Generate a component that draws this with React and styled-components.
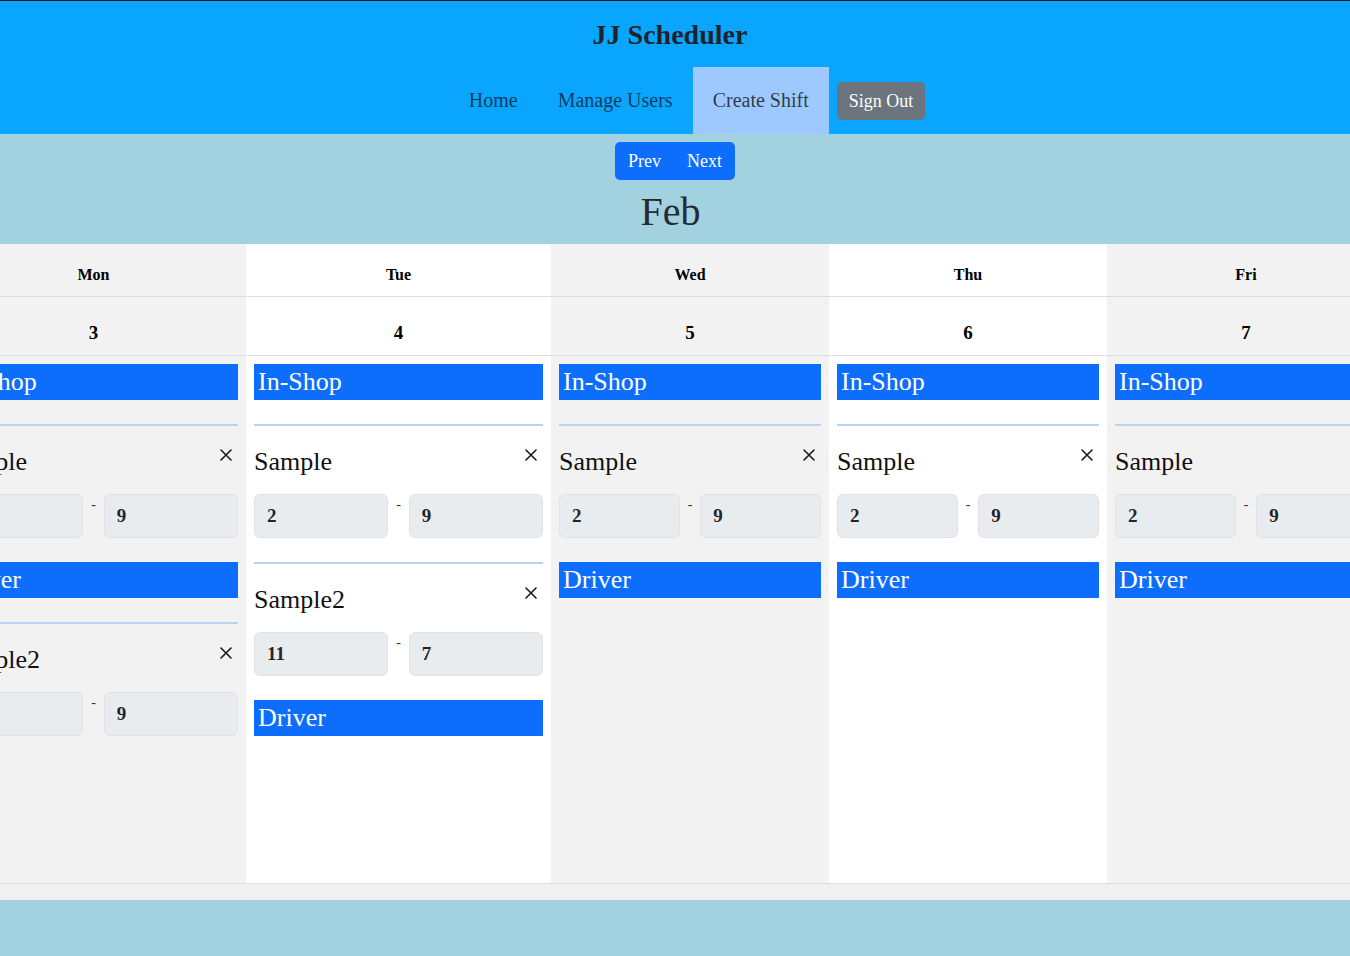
import { useLayoutEffect, useRef } from "react";
import styled, { createGlobalStyle } from "styled-components";

const GlobalStyle = createGlobalStyle`
  html, body {
    margin: 0;
    padding: 0;
    background: #a2d1df;
    font-family: "Liberation Serif", "Times New Roman", serif;
    color: #212529;
  }
`;

const Header = styled.header`
  background-color: #0aa5ff;
  border-top: 1px solid #151515;
`;

const Title = styled.h1`
  margin: 0 0 12px;
  padding: 14px 10px 0 0;
  font-size: 28px;
  line-height: 40px;
  font-weight: bold;
  text-align: center;
  color: #1c2329;
`;

const Nav = styled.nav`
  display: flex;
  justify-content: center;
  align-items: center;
  height: 67px;
  padding-left: 24px;
`;

const NavLink = styled.a`
  display: flex;
  align-items: center;
  height: 100%;
  padding: 0 20px;
  font-size: 20px;
  color: ${(p) => (p.$active ? "rgba(0, 0, 0, 0.72)" : "rgba(0, 0, 0, 0.66)")};
  background: ${(p) => (p.$active ? "#9ec9fe" : "transparent")};
  text-decoration: none;
  cursor: pointer;
`;

const SignOut = styled.button`
  margin-left: 8px;
  padding: 7px 12px;
  font-family: inherit;
  font-size: 18px;
  line-height: 24px;
  color: #fff;
  background: #6c757d;
  border: none;
  border-radius: 5px;
  cursor: pointer;
`;

const MonthBar = styled.section`
  display: flex;
  flex-direction: column;
  align-items: center;
  padding-top: 8px;
  background: #a2d1df;
`;

const ButtonGroup = styled.div`
  display: flex;
  border-radius: 5px;
  overflow: hidden;
  background: #0d6efd;
`;

const PageButton = styled.button`
  padding: 7px 13px;
  font-family: inherit;
  font-size: 18px;
  line-height: 24px;
  color: #fff;
  background: transparent;
  border: none;
  cursor: pointer;
`;

const Month = styled.h2`
  margin: 8px 0 8px;
  padding-right: 9px;
  font-size: 40px;
  line-height: 48px;
  font-weight: normal;
  color: #262b30;
`;

const Calendar = styled.div`
  overflow-x: auto;
  scrollbar-width: none;
  background: #f0f0f0;
  padding-bottom: 16px;

  &::-webkit-scrollbar {
    display: none;
  }
`;

const Week = styled.div`
  display: flex;
  width: max-content;
`;

const Day = styled.div`
  display: flex;
  flex-direction: column;
  flex-shrink: 0;
  width: ${(p) => p.$width}px;
  background: ${(p) => (p.$shade ? "#f2f2f2" : "#ffffff")};
`;

const DayName = styled.div`
  height: 53px;
  padding-top: 19px;
  box-sizing: border-box;
  text-align: center;
  font-size: 16px;
  line-height: 24px;
  font-weight: bold;
  color: #000;
  border-bottom: 1px solid #dedede;
`;

const DayNumber = styled.div`
  height: 59px;
  padding-top: 24px;
  box-sizing: border-box;
  text-align: center;
  font-size: 19px;
  line-height: 24px;
  font-weight: bold;
  color: #000;
  border-bottom: 1px solid #dedede;
`;

const DayBody = styled.div`
  display: flex;
  flex-direction: column;
  gap: 24px;
  height: 528px;
  padding: 8px;
  box-sizing: border-box;
  border-bottom: 1px solid #dedede;
`;

const Role = styled.div`
  height: 36px;
  padding-left: 4px;
  font-size: 26px;
  line-height: 36px;
  color: #fff;
  background: #0d6efd;
  white-space: nowrap;
  overflow: hidden;
`;

const Shift = styled.div`
  border-top: 2px solid #b9d3f5;
  padding-top: 16px;
`;

const ShiftHead = styled.div`
  display: flex;
  justify-content: space-between;
  align-items: flex-start;
  margin-bottom: 12px;
`;

const ShiftName = styled.span`
  font-size: 26px;
  line-height: 40px;
  color: #111;
`;

const CloseButton = styled.button`
  display: flex;
  align-items: center;
  justify-content: center;
  width: 24px;
  height: 24px;
  margin-top: 1px;
  padding: 0;
  background: transparent;
  border: none;
  color: #1a1a1a;
  cursor: pointer;
`;

const TimeRow = styled.div`
  display: flex;
  align-items: flex-start;
`;

const TimeInput = styled.input`
  flex: 1;
  width: 0;
  min-width: 0;
  height: 44px;
  box-sizing: border-box;
  padding: 0 12px;
  font-family: inherit;
  font-size: 19px;
  font-weight: bold;
  color: #212529;
  background: #e9ecef;
  border: 1px solid #dfe2e6;
  border-radius: 6px;
`;

const Dash = styled.span`
  padding: 0 8px;
  font-size: 14px;
  line-height: 22px;
  color: #333;
`;

const week = [
  {
    name: "Mon",
    date: 3,
    width: 305,
    items: [
      { role: "In-Shop" },
      { name: "Sample", start: "2", end: "9" },
      { role: "Driver" },
      { name: "Sample2", start: "11", end: "9" },
    ],
  },
  {
    name: "Tue",
    date: 4,
    width: 305,
    items: [
      { role: "In-Shop" },
      { name: "Sample", start: "2", end: "9" },
      { name: "Sample2", start: "11", end: "7" },
      { role: "Driver" },
    ],
  },
  {
    name: "Wed",
    date: 5,
    width: 278,
    items: [
      { role: "In-Shop" },
      { name: "Sample", start: "2", end: "9" },
      { role: "Driver" },
    ],
  },
  {
    name: "Thu",
    date: 6,
    width: 278,
    items: [
      { role: "In-Shop" },
      { name: "Sample", start: "2", end: "9" },
      { role: "Driver" },
    ],
  },
  {
    name: "Fri",
    date: 7,
    width: 278,
    items: [
      { role: "In-Shop" },
      { name: "Sample", start: "2", end: "9" },
      { role: "Driver" },
    ],
  },
];

const CloseIcon = () => (
  <svg width="12" height="12" viewBox="0 0 12 12" fill="none">
    <path d="M1 1 L11 11 M11 1 L1 11" stroke="currentColor" strokeWidth="1.6" strokeLinecap="round" />
  </svg>
);

const App = () => {
  const calendarRef = useRef(null);

  useLayoutEffect(() => {
    if (calendarRef.current) calendarRef.current.scrollLeft = 59;
  }, []);

  return (
    <>
      <GlobalStyle />
      <Header>
        <Title>JJ Scheduler</Title>
        <Nav>
          <NavLink>Home</NavLink>
          <NavLink>Manage Users</NavLink>
          <NavLink $active>Create Shift</NavLink>
          <SignOut>Sign Out</SignOut>
        </Nav>
      </Header>

      <MonthBar>
        <ButtonGroup>
          <PageButton>Prev</PageButton>
          <PageButton>Next</PageButton>
        </ButtonGroup>
        <Month>Feb</Month>
      </MonthBar>

      <Calendar ref={calendarRef}>
        <Week>
          {week.map((day, i) => (
            <Day key={day.name} $width={day.width} $shade={i % 2 === 0}>
              <DayName>{day.name}</DayName>
              <DayNumber>{day.date}</DayNumber>
              <DayBody>
                {day.items.map((item, j) =>
                  item.role ? (
                    <Role key={j}>{item.role}</Role>
                  ) : (
                    <Shift key={j}>
                      <ShiftHead>
                        <ShiftName>{item.name}</ShiftName>
                        <CloseButton aria-label="Remove">
                          <CloseIcon />
                        </CloseButton>
                      </ShiftHead>
                      <TimeRow>
                        <TimeInput defaultValue={item.start} />
                        <Dash>-</Dash>
                        <TimeInput defaultValue={item.end} />
                      </TimeRow>
                    </Shift>
                  )
                )}
              </DayBody>
            </Day>
          ))}
        </Week>
      </Calendar>
    </>
  );
};

export default App;
